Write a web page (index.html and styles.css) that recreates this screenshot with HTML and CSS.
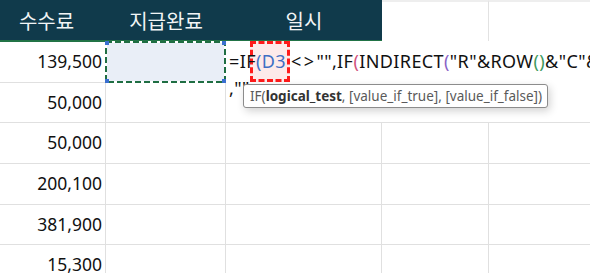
FILE: index.html
```html
<!DOCTYPE html>
<html lang="ko">
<head>
<meta charset="utf-8">
<link rel="stylesheet" href="styles.css">
</head>
<body>
<div class="sheet">
  <div class="hd hd-first">수수료</div>
  <div class="hd">지급완료</div>
  <div class="hd">일시</div>
  <div class="hd-blank"></div>
  <div class="hd-blank end"></div>

  <div class="cell num">139,500</div>
  <div class="cell sel">
    <svg class="ants" width="121" height="42" viewBox="0 0 121 42">
      <rect x="1" y="1" width="119" height="40" fill="none" stroke="#ffffff" stroke-width="2"/>
      <rect x="1" y="1" width="119" height="40" fill="none" stroke="#1f6e43" stroke-width="2" stroke-dasharray="6 3"/>
      <rect x="0" y="0" width="4" height="4" fill="#3a6fd0"/>
      <rect x="117" y="0" width="4" height="4" fill="#3a6fd0"/>
      <rect x="0" y="38" width="4" height="4" fill="#3a6fd0"/>
      <rect x="117" y="38" width="4" height="4" fill="#3a6fd0"/>
    </svg>
  </div>
  <div class="cell edit-host">
    <div class="edit">
      <div class="refbox"></div>
      <div class="line l1"><span>=IF</span><span class="c-blue">(D3</span><span class="caret"></span><span class="op">&lt;</span><span class="op">&gt;</span><span>"",IF</span><span class="c-pink">(</span><span>INDIRECT</span><span class="c-purple">(</span><span>"R"&amp;ROW</span><span class="c-green">()</span><span>&amp;"C"&amp;</span></div>
      <div class="line l2">,""</div>
    </div>
  </div>
  <div class="cell"></div>
  <div class="cell end"></div>

  <div class="cell num">50,000</div>
  <div class="cell"></div>
  <div class="cell"></div>
  <div class="cell"></div>
  <div class="cell end"></div>

  <div class="cell num">50,000</div>
  <div class="cell"></div>
  <div class="cell"></div>
  <div class="cell"></div>
  <div class="cell end"></div>

  <div class="cell num">200,100</div>
  <div class="cell"></div>
  <div class="cell"></div>
  <div class="cell"></div>
  <div class="cell end"></div>

  <div class="cell num">381,900</div>
  <div class="cell"></div>
  <div class="cell"></div>
  <div class="cell"></div>
  <div class="cell end"></div>

  <div class="cell num">15,300</div>
  <div class="cell"></div>
  <div class="cell"></div>
  <div class="cell"></div>
  <div class="cell end"></div>

  <div class="tip">IF(<b>logical_test</b>, [value_if_true], [value_if_false])</div>
</div>
</body>
</html>
```
FILE: styles.css
```css
html, body {
  margin: 0;
  padding: 0;
  background: #ffffff;
  overflow: hidden;
}
.sheet {
  position: relative;
  width: 590px;
  height: 273px;
  overflow: hidden;
  display: grid;
  grid-template-columns: 106px 120px 156px 107px 1fr;
  grid-template-rows: 42px 41px 40px 41px 41px 40px 41px;
  font-family: "Noto Sans", "Open Sans", "Noto Sans CJK KR", sans-serif;
}
.hd {
  background: #103a4b;
  border-bottom: 2px solid #217346;
  color: #f2f5f6;
  font-family: "Noto Sans CJK KR", "Noto Sans", sans-serif;
  font-size: 20px;
  display: flex;
  align-items: center;
  justify-content: center;
  padding-top: 1px;
  box-sizing: border-box;
}
.hd-first {
  padding-right: 13px;
}
.hd-blank {
  border-top: 2px solid #eeeeee;
  border-right: 1px solid #e2e2e2;
  border-bottom: 1px solid #e2e2e2;
  margin-bottom: -1px;
  box-sizing: border-box;
}
.hd-blank.end, .cell.end { border-right: none; }
.cell {
  border-right: 1px solid #e0e0e0;
  border-bottom: 1px solid #e0e0e0;
  box-sizing: border-box;
  position: relative;
}
.num {
  font-size: 17.5px;
  color: #111111;
  display: flex;
  align-items: center;
  justify-content: flex-end;
  padding-right: 3px;
  padding-bottom: 2px;
}
.sel {
  background: #e9eef7;
}
.ants {
  position: absolute;
  left: -1px;
  top: -1px;
  display: block;
}
.edit-host { z-index: 2; }
.edit {
  position: absolute;
  left: 0;
  top: -1px;
  width: 364px;
  height: 81px;
  background: #ffffff;
  padding: 0 0 0 3px;
  box-sizing: border-box;
  font-size: 18px;
  letter-spacing: 0.4px;
  color: #111111;
  white-space: nowrap;
}
.refbox {
  position: absolute;
  left: 24px;
  top: 0;
  width: 40px;
  height: 41px;
  background: #fdeaea;
  border: 3px dashed #ff1a1a;
  box-sizing: border-box;
}
.line {
  position: relative;
  display: flex;
  align-items: center;
  line-height: 24px;
}
.l1 {
  height: 41px;
  padding-bottom: 1px;
  box-sizing: border-box;
}
.l2 {
  margin-top: -6px;
  height: 24px;
}
.op { margin-right: 2px; }
.c-blue { color: #3f6fc4; }
.c-pink { color: #d0527e; }
.c-purple { color: #8a63c6; }
.c-green { color: #3e9a5e; }
.caret {
  display: inline-block;
  width: 1.5px;
  height: 18px;
  background: #000000;
  margin: 0 3px 0 2px;
}
.tip {
  position: absolute;
  left: 243px;
  top: 84px;
  width: 305px;
  height: 24px;
  box-sizing: border-box;
  background: #ffffff;
  border: 1px solid #8c8c8c;
  border-radius: 3px;
  box-shadow: 2px 3px 8px rgba(0,0,0,0.18);
  font-size: 13.5px;
  color: #5a5a5a;
  padding: 0 0 0 6px;
  line-height: 22px;
  white-space: nowrap;
  z-index: 5;
}
.tip b {
  color: #333333;
  font-weight: 700;
}
```
